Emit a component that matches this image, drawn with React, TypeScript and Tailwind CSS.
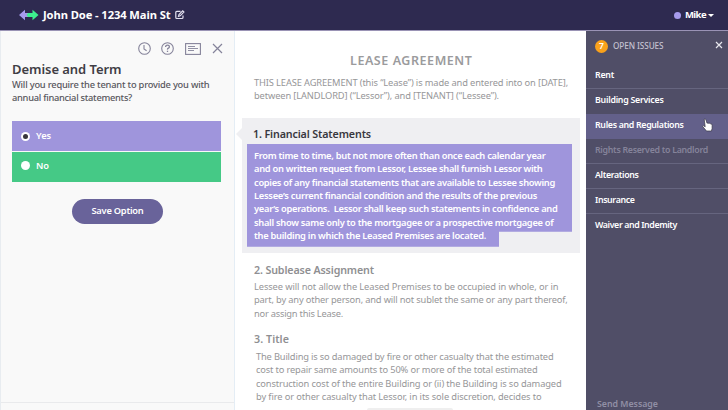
import React, { useLayoutEffect, useRef, useState } from "react";

type LineProps = { w: number; children: string };

/* One line of copy whose tracking is fitted to a given measure. */
function Line({ w, children }: LineProps) {
  const ref = useRef<HTMLSpanElement>(null);
  const [tracking, setTracking] = useState(0);
  useLayoutEffect(() => {
    if (ref.current) {
      const natural = ref.current.getBoundingClientRect().width;
      setTracking((w - natural) / children.length);
    }
  }, [w, children]);
  return (
    <div className="whitespace-pre">
      <span ref={ref} style={{ letterSpacing: tracking }}>{children}</span>
    </div>
  );
}

function Issue({ label, width, className = "" }: { label: string; width: number; className?: string }) {
  return (
    <li className={`flex h-[25px] items-center border-b border-[#66657f] pl-[9px] ${className}`}>
      <Line w={width}>{label}</Line>
    </li>
  );
}

function Header() {
  return (
    <header className="flex h-[31px] shrink-0 items-center border-b border-[#9a93b5] bg-[#2e2a50] pl-[19px] pr-[14px] text-white">
      <svg width="20" height="12" viewBox="0 0 20 12" className="shrink-0">
        <path d="M0 6 6 .8V4h5v4H6v3.2z" fill="#a79bed" />
        <path d="M19.5 6 13.5.8V4H9L7.5 6 9 8h4.500v3.200z" fill="#3df08f" />
      </svg>
      <h1 className="ml-1 w-[127px] text-[11.200px] font-bold leading-[16px]">
        <Line w={127.5}>John Doe - 1234 Main St</Line>
      </h1>
      <svg width="10" height="10" viewBox="0 0 10 10" fill="none" stroke="#e4e1f0" strokeWidth="1.200" className="ml-[5px]">
        <path d="M5.500 1.300H1.800Q.8 1.300.8 2.300v5.200q0 1 1 1h5.200q1 0 1-1V5.500" />
        <path d="M3.500 6.300 4 4.600 7.700.9l1.200 1.200L5.200 5.800z" />
      </svg>
      <div className="ml-auto flex items-center">
        <span className="size-[7px] rounded-full bg-[#a79bed]" />
        <div className="ml-[4px] w-[21px] text-[9.500px] font-bold leading-[14px]">
          <Line w={21}>Mike</Line>
        </div>
        <span className="ml-[2px] border-x-[3px] border-t-[3px] border-x-transparent border-t-white" />
      </div>
    </header>
  );
}

function QuestionPanel() {
  return (
    <section className="flex w-[235px] shrink-0 flex-col border-l border-r border-l-[#e8ecf0] border-r-[#e4edf5] bg-[#f9f9f9] pl-[11px]">
      <div className="mt-[11px] flex h-[13px] items-center pl-[126px] text-[#85839a]">
        <svg width="13" height="13" viewBox="0 0 13 13" fill="none" stroke="currentColor" strokeWidth="1.100">
          <circle cx="6.500" cy="6.500" r="5.800" />
          <path d="M6 3v4l2.600 1.800" />
        </svg>
        <svg width="13" height="13" viewBox="0 0 13 13" fill="none" stroke="currentColor" strokeWidth="1.100" className="ml-[10px]">
          <circle cx="6.500" cy="6.500" r="5.800" />
          <path d="M4.600 5q0-1.900 1.900-1.900T8.400 4.800q0 .9-1 1.400t-.9 1.400" strokeWidth="1.300" />
          <path d="M6.500 8.700V10" strokeWidth="1.300" />
        </svg>
        <svg width="16" height="12" viewBox="0 0 16 12" fill="none" stroke="currentColor" className="ml-[11px]">
          <rect x=".6" y=".6" width="14.800" height="10.800" strokeWidth="1.100" />
          <path d="M3 3.500h7M3 5.500h10M3 7.500h6" strokeWidth=".9" />
        </svg>
        <svg width="11" height="11" viewBox="0 0 11 11" fill="none" stroke="currentColor" strokeWidth="1.200" className="ml-[11px]">
          <path d="m1 1 9 9m0-9-9 9" />
        </svg>
      </div>
      <h2 className="mt-[6px] text-[13px] font-semibold leading-[16px] text-[#3f3e45]">
        <Line w={109.5}>Demise and Term</Line>
      </h2>
      <div className="mt-px text-[9.300px] font-medium leading-[13.400px] text-[#57565c]">
        <Line w={197.5}>Will you require the tenant to provide you with</Line>
        <Line w={120}>annual financial statements?</Line>
      </div>
      <div className="mt-[16px] w-[209px] text-[9.300px] font-semibold text-white">
        <div className="flex h-[30px] items-center bg-[#9f95dc] pl-[9px] pt-px">
          <span className="flex size-[9px] items-center justify-center rounded-full bg-white">
            <span className="size-[5px] rounded-full bg-[#38363c]" />
          </span>
          <span className="ml-[6px]">Yes</span>
        </div>
        <div className="mt-px flex h-[30px] items-center bg-[#45c986] pb-[2px] pl-[9px]">
          <span className="size-[9px] rounded-full bg-white" />
          <span className="ml-[6px]">No</span>
        </div>
      </div>
      <button className="ml-[60px] mt-[17px] flex h-[25px] w-[91px] items-center justify-center rounded-full bg-[#69639a] text-[9.300px] font-semibold text-white">
        <Line w={52}>Save Option</Line>
      </button>
      <div className="-ml-[11px] mb-[7px] mt-auto h-px bg-[#e9eaec]" />
    </section>
  );
}

function LeaseDocument() {
  return (
    <article className="relative w-[351px] shrink-0 bg-white pl-[7px] text-[9.300px] leading-[13.400px] text-[#969698]">
      <h2 className="ml-[108px] pt-[21px] text-[12.500px] font-semibold leading-[17px] text-[#9b9b9d]">
        <Line w={122.5}>LEASE AGREEMENT</Line>
      </h2>
      <div className="ml-[12px] mt-[7px]">
        <Line w={314}>THIS LEASE AGREEMENT (this “Lease”) is made and entered into on [DATE],</Line>
        <Line w={245}>between [LANDLORD] (“Lessor”), and [TENANT] (“Lessee”).</Line>
      </div>
      <section className="relative mt-[15px] h-[135px] w-[338px] bg-[#efeff2]">
        <span className="absolute -left-[6px] top-[10px] border-y-[6px] border-r-[6px] border-y-transparent border-r-[#efeff2]" />
        <h3 className="ml-[11px] pt-[8px] text-[10.700px] font-semibold leading-[16px] text-[#38373e]">
          <Line w={118}>1. Financial Statements</Line>
        </h3>
        <div className="ml-[5px] mt-[2px] h-[103px] w-[325px] bg-[#9f95dc] pl-[7px] pt-[5px] font-semibold text-white [clip-path:polygon(0_0,100%_0,100%_88px,252px_88px,252px_100%,0_100%)]">
          <Line w={291.5}>From time to time, but not more often than once each calendar year</Line>
          <Line w={288.5}>and on written request from Lessor, Lessee shall furnish Lessor with</Line>
          <Line w={301}>copies of any financial statements that are available to Lessee showing</Line>
          <Line w={283}>Lessee’s current financial condition and the results of the previous</Line>
          <Line w={303.5}>year’s operations.  Lessor shall keep such statements in confidence and</Line>
          <Line w={299.5}>shall show same only to the mortgagee or a prospective mortgagee of</Line>
          <Line w={232}>the building in which the Leased Premises are located.</Line>
        </div>
      </section>
      <h3 className="ml-[12px] mt-[9px] text-[10.700px] font-semibold leading-[16px] text-[#8f8f92]">
        <Line w={120}>2. Sublease Assignment</Line>
      </h3>
      <div className="ml-[12px] mt-[2px]">
        <Line w={304.5}>Lessee will not allow the Leased Premises to be occupied in whole, or in</Line>
        <Line w={313.5}>part, by any other person, and will not sublet the same or any part thereof,</Line>
        <Line w={89}>nor assign this Lease.</Line>
      </div>
      <h3 className="ml-[12px] mt-[11px] text-[10.700px] font-semibold leading-[16px] text-[#8f8f92]">
        <Line w={35}>3. Title</Line>
      </h3>
      <div className="ml-[14px] mt-[3px]">
        <Line w={297.5}>The Building is so damaged by fire or other casualty that the estimated</Line>
        <Line w={281.5}>cost to repair same amounts to 50% or more of the total estimated</Line>
        <Line w={305.5}>construction cost of the entire Building or (ii) the Building is so damaged</Line>
        <Line w={285.5}>by fire or other casualty that Lessor, in its sole discretion, decides to</Line>
      </div>
      <div className="absolute bottom-0 left-[132px] h-[2px] w-[86px] rounded-t-full bg-[#efefef]" />
    </article>
  );
}

function IssuesPanel() {
  return (
    <aside className="relative flex min-w-0 flex-1 flex-col bg-[#504e67] text-[8.800px] font-semibold text-white">
      <div className="mb-[2px] flex h-[30px] items-center pl-[9px] pr-[5px]">
        <span className="flex size-[13px] items-center justify-center rounded-full bg-[#f9a11b] text-[8.500px] leading-none">7</span>
        <div className="ml-[5px] text-[8.200px] font-medium text-[#c3c1d0]">
          <Line w={50.5}>OPEN ISSUES</Line>
        </div>
        <svg width="8" height="8" viewBox="0 0 8 8" className="mb-[2px] ml-auto" fill="none" stroke="#e8e7ee" strokeWidth="1.200">
          <path d="m1 1 6 6m0-6-6 6" />
        </svg>
      </div>
      <ul className="pt-px">
        <Issue label="Rent" width={19} />
        <Issue label="Building Services" width={68.5} className="border-b-transparent" />
        <Issue label="Rules and Regulations" width={88.5} className="border-b-transparent bg-[#63608a]" />
        <Issue label="Rights Reserved to Landlord" width={113} className="text-[#85839a]" />
        <Issue label="Alterations" width={43.5} />
        <Issue label="Insurance" width={39.5} />
        <Issue label="Waiver and Indemity" width={82} className="border-b-transparent" />
      </ul>
      <div className="mb-[-1px] ml-[11px] mt-auto leading-[13px] text-[#918fa5]">
        <Line w={61}>Send Message</Line>
      </div>
      <svg width="11" height="14" viewBox="0 0 11 14" className="absolute left-[116px] top-[87px]" fill="#fff" stroke="#3b3948" strokeWidth=".7">
        <path d="M2.200 1.200q1-.7 1.600.4l1.200 3.600 1-.3.8.5 1-.2.7.6 1 .1.6 1.200v3.300l-.7 2.600H4.500L.8 8.600Q.3 7.700 1.300 7.600l1.900 1.200z" />
      </svg>
    </aside>
  );
}

export default function App() {
  return (
    <div className="flex h-[410px] w-[728px] flex-col overflow-hidden bg-white font-['Noto_Sans',sans-serif]">
      <Header />
      <main className="flex min-h-0 flex-1">
        <QuestionPanel />
        <LeaseDocument />
        <IssuesPanel />
      </main>
    </div>
  );
}
